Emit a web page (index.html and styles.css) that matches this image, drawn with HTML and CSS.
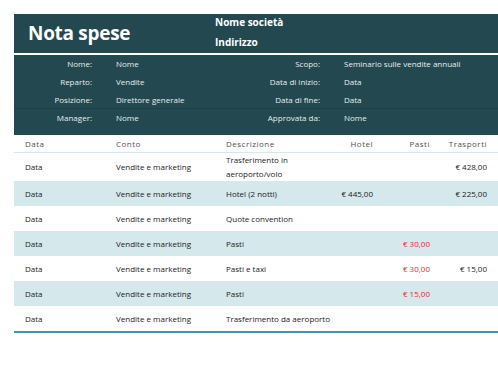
FILE: index.html
```html
<!DOCTYPE html>
<html lang="it">
<head>
<meta charset="utf-8">
<title>Nota spese</title>
<link rel="stylesheet" href="styles.css">
</head>
<body>
<div class="page">
  <header class="title-band">
    <h1 class="title">Nota spese</h1>
    <div class="company">
      <div>Nome società</div>
      <div>Indirizzo</div>
    </div>
  </header>
  <section class="info-band">
    <div class="info-row">
      <span class="lbl">Nome:</span><span class="val">Nome</span>
      <span class="lbl">Scopo:</span><span class="val">Seminario sulle vendite annuali</span>
    </div>
    <div class="info-row">
      <span class="lbl">Reparto:</span><span class="val">Vendite</span>
      <span class="lbl">Data di inizio:</span><span class="val">Data</span>
    </div>
    <div class="info-row sep">
      <span class="lbl">Posizione:</span><span class="val">Direttore generale</span>
      <span class="lbl">Data di fine:</span><span class="val">Data</span>
    </div>
    <div class="info-row">
      <span class="lbl">Manager:</span><span class="val">Nome</span>
      <span class="lbl">Approvata da:</span><span class="val">Nome</span>
    </div>
  </section>
  <table class="expenses">
    <colgroup>
      <col class="c-data"><col class="c-conto"><col class="c-desc"><col class="c-hotel"><col class="c-pasti"><col class="c-trasp">
    </colgroup>
    <thead>
      <tr><th>Data</th><th>Conto</th><th>Descrizione</th><th class="num">Hotel</th><th class="num">Pasti</th><th class="num">Trasporti</th></tr>
    </thead>
    <tbody>
      <tr class="tall"><td>Data</td><td>Vendite e marketing</td><td class="desc">Trasferimento in aeroporto/volo</td><td class="num"></td><td class="num"></td><td class="num">€ 428,00</td></tr>
      <tr class="alt"><td>Data</td><td>Vendite e marketing</td><td class="desc">Hotel (2 notti)</td><td class="num">€ 445,00</td><td class="num"></td><td class="num">€ 225,00</td></tr>
      <tr><td>Data</td><td>Vendite e marketing</td><td class="desc">Quote convention</td><td class="num"></td><td class="num"></td><td class="num"></td></tr>
      <tr class="alt"><td>Data</td><td>Vendite e marketing</td><td class="desc">Pasti</td><td class="num"></td><td class="num red">€ 30,00</td><td class="num"></td></tr>
      <tr><td>Data</td><td>Vendite e marketing</td><td class="desc">Pasti e taxi</td><td class="num"></td><td class="num red">€ 30,00</td><td class="num">€ 15,00</td></tr>
      <tr class="alt"><td>Data</td><td>Vendite e marketing</td><td class="desc">Pasti</td><td class="num"></td><td class="num red">€ 15,00</td><td class="num"></td></tr>
      <tr class="last"><td>Data</td><td>Vendite e marketing</td><td class="desc nowrap">Trasferimento da aeroporto</td><td class="num"></td><td class="num"></td><td class="num"></td></tr>
    </tbody>
  </table>
</div>
</body>
</html>
```
FILE: styles.css
```css
html, body {
  margin: 0;
  padding: 0;
  background: #ffffff;
}
body {
  font-family: "Open Sans", "Noto Sans", sans-serif;
  color: #222222;
}
.page {
  padding: 14px 0 0 14px;
}
.title-band {
  background: #234850;
  height: 39px;
  display: flex;
  align-items: stretch;
  border-bottom: 2px solid #ffffff;
}
.title {
  margin: 0;
  width: 187px;
  padding-left: 14px;
  font-size: 19px;
  font-weight: 700;
  color: #ffffff;
  line-height: 39px;
  letter-spacing: -0.3px;
}
.company {
  display: flex;
  flex-direction: column;
  justify-content: space-between;
  padding: 1px 0 3px;
  font-size: 10px;
  font-weight: 700;
  color: #ffffff;
  line-height: 15px;
}
.info-band {
  background: #234850;
  height: 80px;
  box-sizing: border-box;
  padding-top: 0;
  font-size: 8px;
  color: #e6eeee;
}
.info-row {
  display: grid;
  grid-template-columns: 78px 110px 70px 1fr;
  column-gap: 24px;
  height: 18px;
  line-height: 17px;
}
.info-row.sep {
  box-shadow: inset 0 -1px 0 #1f4047;
}
.info-row .lbl {
  text-align: right;
}
.expenses {
  width: 484px;
  border-collapse: collapse;
  table-layout: fixed;
  font-size: 8px;
}
.c-data { width: 102px; }
.c-conto { width: 110px; }
.c-desc { width: 110px; }
.c-hotel { width: 47px; }
.c-pasti { width: 57px; }
.c-trasp { width: 58px; }
.expenses th {
  height: 17px;
  padding: 0;
  font-weight: 400;
  text-align: left;
  color: #505050;
  letter-spacing: 0.5px;
  border-bottom: 1px solid #d5e8ec;
}
.expenses td {
  height: 25px;
  padding: 0;
  vertical-align: middle;
  line-height: 14px;
}
.expenses th:first-child,
.expenses td:first-child {
  padding-left: 11px;
}
.expenses .num {
  text-align: right;
  padding-right: 10px;
}
.expenses th:last-child,
.expenses td:last-child {
  padding-right: 11px;
}
.expenses tr.tall td {
  height: 26px;
}
.expenses tr.alt td {
  background: #d5e8ec;
}
.expenses tr.last td {
  border-bottom: 2px solid #4e95a3;
}
.expenses .red {
  color: #e8262c;
}
.nowrap {
  white-space: nowrap;
}
```
